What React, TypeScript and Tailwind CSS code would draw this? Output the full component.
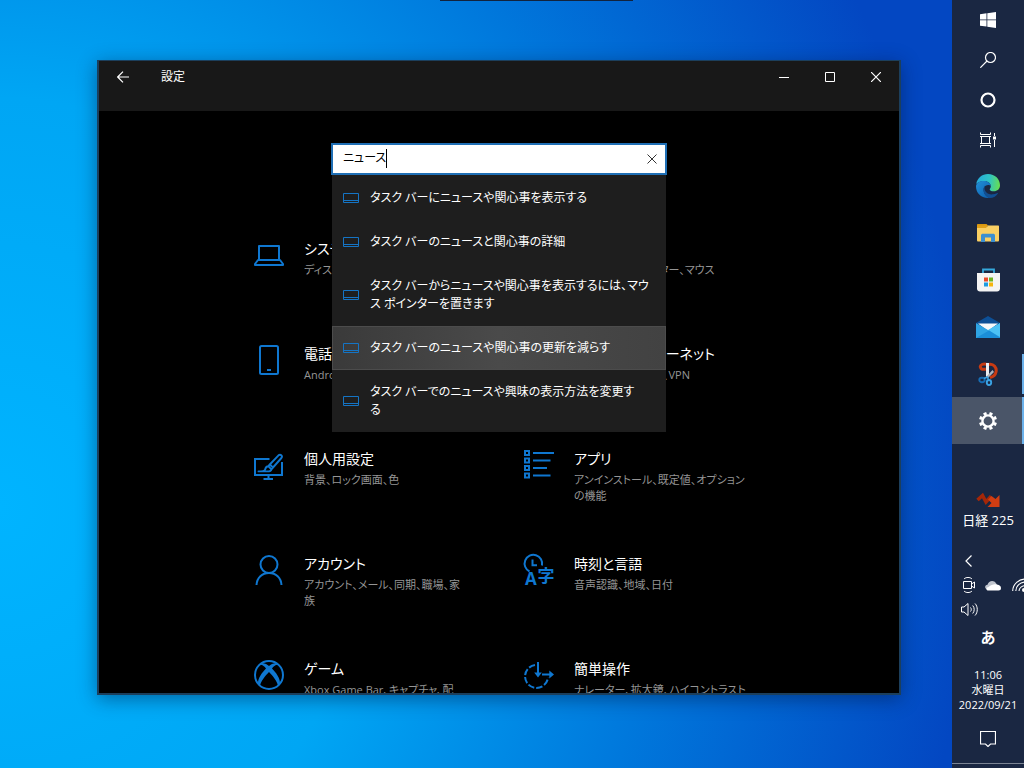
import React, { useState } from "react";

type IconProps = { children: React.ReactNode; size?: number; box?: string; className?: string };

function Svg({ children, size = 30, box = "0 0 30 30", className = "" }: IconProps) {
  return (
    <svg
      width={size}
      height={size}
      viewBox={box}
      fill="none"
      stroke="currentColor"
      aria-hidden="true"
      className={`shrink-0 ${className}`}
    >
      {children}
    </svg>
  );
}

const LaptopIcon = () => (
  <Svg>
    <path strokeWidth="2" d="M5 19.5V6H25V19.5M4 20H26L29 24V25H1V24Z" strokeLinejoin="round" />
  </Svg>
);

const PhoneIcon = () => (
  <Svg>
    <rect x="6" y="1" width="18" height="28" rx="1.500" strokeWidth="2" />
    <path strokeWidth="2" d="M13 25H17" />
  </Svg>
);

const DevicesIcon = () => (
  <Svg>
    <rect x="2" y="6" width="18" height="18" strokeWidth="2" />
    <rect x="22" y="10" width="6" height="14" strokeWidth="2" />
  </Svg>
);

const GlobeIcon = () => (
  <Svg>
    <circle cx="15" cy="15" r="13" strokeWidth="2" />
    <path strokeWidth="2" d="M2 15H28M15 2C8 9 8 21 15 28M15 2C22 9 22 21 15 28" />
  </Svg>
);

const PersonalizeIcon = () => (
  <Svg box="0 -4 30 30">
    <path strokeWidth="2" d="M15.500 5H1V21H28V8" />
    <path strokeWidth="2" d="M14.500 22V25M9.500 25H19" />
    <path
      strokeWidth="1.900"
      strokeLinejoin="round"
      d="M15.800 10.500L24.500 1.300C26.500 -0.300 29 1.800 27.400 4L19 13.500ZM15.800 10.500L14.300 12.200L17.400 15.300L19 13.500M14.300 12.200C12.500 12.300 11.500 13.800 11.200 15.300C11 16.700 10 17.400 4.500 17.400H13C15.500 17.400 17.300 16.500 17.400 15.300"
    />
  </Svg>
);

const AppsIcon = () => (
  <Svg>
    <g strokeWidth="2">
      <path d="M1 1H5V5H1ZM1 8.500H5V12.500H1ZM1 16H5V20H1ZM1 23.500H5V27.500H1Z" />
      <path d="M9 3H30M9 10.500H26.500M9 18H23M9 25.500H26.500" />
    </g>
  </Svg>
);

const AccountIcon = () => (
  <Svg>
    <circle cx="15" cy="9.500" r="8.500" strokeWidth="2" />
    <path strokeWidth="2" d="M2.500 30C3 22.500 8 18 15 18S27 22.500 27.500 30" />
  </Svg>
);

const LanguageIcon = () => (
  <Svg className="overflow-visible">
    <path strokeWidth="2" d="M5.500 16.500A8.800 8.800 0 1 1 18 10.500M8.500 4.500V10.300H13" />
    <text x="1" y="30" fontSize="17" fontWeight="700" fill="currentColor" stroke="none" fontFamily="Open Sans, sans-serif">
      A
    </text>
    <text x="13.500" y="26.500" fontSize="17" fontWeight="700" fill="currentColor" stroke="none" fontFamily="Noto Sans CJK JP, sans-serif">
      字
    </text>
  </Svg>
);

const GamingIcon = () => (
  <Svg>
    <circle cx="15" cy="15" r="14" strokeWidth="2" />
    <path
      fill="currentColor"
      stroke="none"
      d="M7.500 3.500C10 2.800 13 4.500 15 6C17 4.500 20 2.800 22.500 3.500L24.500 5C22 4.300 19.500 6.500 18 8.500C21.500 12 27 19 25.800 24L24 26C23.500 21.500 18.500 15.500 15 12C11.500 15.500 6.500 21.500 6 26L4.200 24C3 19 8.500 12 12 8.500C10.500 6.500 8 4.300 5.500 5Z"
    />
  </Svg>
);

const EaseIcon = () => (
  <Svg>
    <path strokeWidth="2" strokeDasharray="6.500 2" d="M11 5A11.500 11.500 0 1 0 24 17.500" />
    <path strokeWidth="2" d="M14 2V15M18 14.500H28" />
    <path fill="currentColor" stroke="none" d="M10.200 12.500H17.800L14 17.500ZM25.300 10.500L30 14.500L25.300 18.500Z" />
  </Svg>
);

const categories = [
  { title: "システム", detail: "ディスプレイ、サウンド、通知、電源", Icon: LaptopIcon },
  { title: "デバイス", detail: "Bluetooth、プリンター、マウス", Icon: DevicesIcon },
  { title: "電話", detail: "Android、iPhone のリンク", Icon: PhoneIcon },
  { title: "ネット と インターネット", detail: "Wi-Fi と機内モード、VPN", Icon: GlobeIcon },
  { title: "個人用設定", detail: "背景、ロック画面、色", Icon: PersonalizeIcon },
  { title: "アプリ", detail: "アンインストール、既定値、オプション\nの機能", Icon: AppsIcon },
  { title: "アカウント", detail: "アカウント、メール、同期、職場、家\n族", Icon: AccountIcon },
  { title: "時刻と言語", detail: "音声認識、地域、日付", Icon: LanguageIcon },
  { title: "ゲーム", detail: "Xbox Game Bar、キャプチャ、配", Icon: GamingIcon },
  { title: "簡単操作", detail: "ナレーター、拡大鏡、ハイコントラスト", Icon: EaseIcon },
];

const suggestions = [
  "タスク バーにニュースや関心事を表示する",
  "タスク バーのニュースと関心事の詳細",
  "タスク バーからニュースや関心事を表示するには、マウ\nス ポインターを置きます",
  "タスク バーのニュースや関心事の更新を減らす",
  "タスク バーでのニュースや興味の表示方法を変更す\nる",
];

function SearchBox() {
  const [query, setQuery] = useState("ニュース");
  return (
    <div className="relative mx-auto w-[336px]">
      <div className="flex h-8 items-center border-2 border-[#1f6fb5] bg-white pl-2.5 text-black">
        <input
          aria-label="設定の検索"
          value={query}
          onChange={(e) => setQuery(e.target.value)}
          className="[field-sizing:content] pb-0.5 text-xs caret-transparent outline-none"
        />
        <span className="mb-0.5 h-[19px] w-px bg-black" />
        <button aria-label="クリア" onClick={() => setQuery("")} className="ml-auto flex h-7 w-[26px] items-center justify-center">
          <Svg size={10} box="0 0 10 10">
            <path d="M0.500 0.500L9.500 9.500M9.500 0.500L0.500 9.500" stroke="#333" />
          </Svg>
        </button>
      </div>
      <ul className="absolute inset-x-px top-full z-10 bg-[#1e1e1e] pt-px">
        {suggestions.map((text, i) => (
          <li key={text}>
            <button
              className={`flex w-full items-center gap-[11px] py-[13px] pr-1.5 pl-[11px] text-left text-xs leading-[18px] text-white ${
                i === 3 ? "bg-gradient-to-r from-[#3a3a3a] via-[#4a4a4a] to-[#424242] ring-1 ring-[#4c4c4c] ring-inset" : ""
              }`}
            >
              <svg width="16" height="10" viewBox="0 0 16 10" fill="none" stroke="#1574c4" className="shrink-0" aria-hidden="true">
                <path d="M0.500 0.500H15.500V9.500H0.500ZM0.500 7.500H15.500" />
              </svg>
              <span className="whitespace-pre-line">{text}</span>
            </button>
          </li>
        ))}
      </ul>
    </div>
  );
}

function SettingsWindow() {
  return (
    <section className="flex min-h-0 flex-1 flex-col border-2 border-t border-[#1c3f5c] bg-black text-white shadow-[0_4px_18px_rgba(0,20,60,0.45)]">
      <header className="h-[50px] shrink-0 bg-[#181818]">
        <div className="flex h-8 items-center">
          <button aria-label="戻る" className="flex h-8 w-12 items-center justify-center">
            <Svg size={12} box="0 0 12 12">
              <path d="M12 6H0.700M6 0.700L0.700 6L6 11.300" strokeWidth="1.200" />
            </Svg>
          </button>
          <h1 className="ml-3.5 flex-1 text-xs">設定</h1>
          <button aria-label="最小化" className="flex h-8 w-[46px] items-center justify-center">
            <Svg size={10} box="0 0 10 10"><path d="M0 5.500H10" /></Svg>
          </button>
          <button aria-label="最大化" className="flex h-8 w-[46px] items-center justify-center">
            <Svg size={10} box="0 0 10 10"><path d="M0.500 0.500H9.500V9.500H0.500Z" /></Svg>
          </button>
          <button aria-label="閉じる" className="flex h-8 w-[46px] items-center justify-center">
            <Svg size={10} box="0 0 10 10"><path d="M0 0L10 10M10 0L0 10" strokeWidth="1.200" /></Svg>
          </button>
        </div>
      </header>
      <div className="min-h-0 flex-1 overflow-hidden pt-8">
        <SearchBox />
        <nav className="mt-16 grid auto-rows-[105px] grid-cols-[270px_270px] justify-center">
          {categories.map(({ title, detail, Icon }) => (
            <a key={title} href="#" className="flex gap-5 pl-[25px]">
              <span className="pt-px text-[#0f77d0]">
                <Icon />
              </span>
              <span className="flex min-w-0 flex-1 flex-col gap-[3px]">
                <span className="text-sm leading-5 whitespace-nowrap">{title}</span>
                <span className="text-[11px] leading-4 whitespace-pre-line text-[#959595]">{detail}</span>
              </span>
            </a>
          ))}
        </nav>
      </div>
    </section>
  );
}

function PinnedApps() {
  const cell = "flex h-[47px] w-full items-center justify-center";
  return (
    <>
      <button aria-label="Microsoft Edge" className={cell}>
        <svg width="24" height="24" viewBox="0 0 24 24" aria-hidden="true">
          <defs>
            <linearGradient id="edgeTop" x1="0" y1="0.300" x2="1" y2="0.400">
              <stop offset="0" stopColor="#24a9dc" />
              <stop offset="0.550" stopColor="#2fc3c4" />
              <stop offset="1" stopColor="#66dd53" />
            </linearGradient>
            <linearGradient id="edgeLow" x1="0" y1="0" x2="1" y2="1">
              <stop offset="0" stopColor="#2190d8" />
              <stop offset="1" stopColor="#0c5cab" />
            </linearGradient>
          </defs>
          <path fill="url(#edgeTop)" d="M0.200 10C1.300 4 6 0 12 0C19 0 24 5 24 11.300C24 15 21.300 17.300 17.800 17.300C15 17.300 13.700 16.300 13.700 15.500C13.700 14.800 14.800 14.200 14.800 12.300C14.800 9.500 12 7 8 7C4.500 7 1.500 8.500 0.200 10Z" />
          <path fill="url(#edgeLow)" d="M0 12.500C0 9 3.500 7 8 7C12 7 14.800 9.500 14.800 12C13.500 10.500 9 10.500 7.800 14C6.700 18 10 23 14 23.800C6 25 0 19.500 0 12.500Z" />
          <path fill="#124f92" d="M9 11.500C7 17 11.500 21 17 20.300C19.500 20 21.500 18.700 22.300 18.700C20.500 22 17.500 24 13.500 24C8.500 22.500 5.500 16 9 11.500Z" />
        </svg>
      </button>
      <button aria-label="エクスプローラー" className={cell}>
        <svg width="22" height="18" viewBox="0 0 22 18" aria-hidden="true">
          <path fill="#d7950f" d="M0 1C0 0.300 0.400 0 1 0H9.500L11.500 2H0Z" />
          <path fill="#e0a019" d="M0 1.500H10V5H0Z" />
          <path fill="#f9cf63" d="M0 4H9L11 1.500H21C21.700 1.500 22 1.900 22 2.500V16C22 17 21.500 17.500 20.700 17.500H1.300C0.500 17.500 0 17 0 16Z" />
          <path fill="#3c8fd0" d="M4 18V11.500C4 10.300 4.700 9.700 6 9.700H16C17.300 9.700 18 10.300 18 11.500V18H14V13.500H8V18Z" />
        </svg>
      </button>
      <button aria-label="Microsoft Store" className={cell}>
        <svg width="23" height="24" viewBox="0 0 23 24" aria-hidden="true">
          <path fill="none" stroke="#35a9dc" strokeWidth="1.800" d="M6 6V1.500H17V6" />
          <path fill="#f4f4f4" d="M0 5H23V20.500C23 22.500 21.700 23.500 20 23.500H3C1.300 23.500 0 22.500 0 20.500Z" />
          <path fill="#e84a2a" d="M7 9.500H11V13.500H7Z" />
          <path fill="#6fb422" d="M12 9.500H16V13.500H12Z" />
          <path fill="#1d9be0" d="M7 14.500H11V18.500H7Z" />
          <path fill="#f5b50e" d="M12 14.500H16V18.500H12Z" />
        </svg>
      </button>
      <button aria-label="メール" className={cell}>
        <svg width="24" height="22" viewBox="0 0 24 22" aria-hidden="true">
          <path fill="#0d4f96" d="M0 7L12 0L24 7L12 15Z" />
          <path fill="#f6f8fa" d="M2 7.500H22L12 15Z" />
          <path fill="#2fa4e4" d="M0 7V22H24V7L13 14.500L12 14Z" />
          <path fill="#4cc2f5" d="M24 7V21L12 14Z" />
          <path fill="#1b8ed8" d="M0 22L13 14.500L24 21.500V22Z" />
        </svg>
      </button>
      <button aria-label="切り取り &amp; スケッチ" className="flex h-[47px] w-full items-center border-r-2 border-transparent [border-image:linear-gradient(transparent_5px,#6cb2ec_5px,#6cb2ec_43px,transparent_43px)_1]">
        <span className="flex flex-1 justify-center pl-0.5">
          <svg width="20" height="24" viewBox="0 0 20 24" fill="none" aria-hidden="true">
            <path stroke="#c83a12" strokeWidth="3" d="M10 2.500C5 1 1.500 3 2.500 5.500C3.200 7.500 6 7.500 8 7M10 2.500C16 1 19 6 18 10C17.300 13.500 14.500 15 12 15.500" />
            <path fill="#eceff2" d="M8 1H11V14L9.500 16L8 14Z" />
            <path fill="#aab2bc" d="M14.500 8L16 10L10 16L8.500 14.500Z" />
            <ellipse cx="4" cy="18" rx="2.700" ry="2.200" stroke="#176db4" strokeWidth="1.900" />
            <ellipse cx="11" cy="20.500" rx="2.200" ry="2.500" stroke="#3aa2e4" strokeWidth="1.900" />
            <path stroke="#3aa2e4" strokeWidth="1.500" d="M6 16.500L9.500 15L10.500 18" />
          </svg>
        </span>
      </button>
      <button aria-label="設定" className="flex h-[47px] w-full items-center border-r-2 border-[#6cb2ec] bg-[#4a5568]">
        <span className="flex flex-1 justify-center pl-0.5 text-white">
          <svg width="18" height="18" viewBox="0 0 18 18" fill="none" stroke="currentColor" aria-hidden="true">
            <circle cx="9" cy="9" r="5.600" strokeWidth="2.400" />
            <path
              strokeWidth="3.200"
              d="M6.600 3.200L5.600 0.700M11.400 3.200L12.400 0.700M6.600 14.800L5.600 17.300M11.400 14.800L12.400 17.300M3.200 6.600L0.700 5.600M3.200 11.400L0.700 12.400M14.800 6.600L17.300 5.600M14.800 11.400L17.300 12.400"
            />
          </svg>
        </span>
      </button>
    </>
  );
}

function Taskbar() {
  const cell = "flex h-10 w-full items-center justify-center";
  return (
    <aside className="flex w-[72px] shrink-0 flex-col items-center overflow-hidden bg-[#1a2742] text-white">
      <button aria-label="スタート" className={cell}>
        <svg width="16" height="16" viewBox="0 0 16 16" fill="currentColor" aria-hidden="true">
          <path d="M0 2.200L6.500 1.300V7.500H0ZM7.300 1.200L16 0V7.500H7.300ZM0 8.300H6.500V14.600L0 13.700ZM7.300 8.300H16V16L7.300 14.800Z" />
        </svg>
      </button>
      <button aria-label="検索" className={cell}>
        <Svg size={16} box="0 0 16 16">
          <circle cx="10.500" cy="5.500" r="5" strokeWidth="1.200" />
          <path d="M7 9L0.300 15.700" strokeWidth="1.200" />
        </Svg>
      </button>
      <button aria-label="Cortana" className={cell}>
        <Svg size={16} box="0 0 16 16"><circle cx="8" cy="8" r="6.500" strokeWidth="2.200" /></Svg>
      </button>
      <button aria-label="タスク ビュー" className={cell}>
        <Svg size={16} box="0 0 16 16">
          <path d="M0.500 0.500V2.500H10.500V0.500M0.500 15.500V13.500H10.500V15.500M0 4.500H11M0 11.500H11M1.500 4.500V11.500M9.500 4.500V11.500M14.500 1V4M14.500 8V15" />
          <rect x="13" y="4.500" width="3" height="3" fill="currentColor" stroke="none" />
        </Svg>
      </button>
      <div className="mt-0.5 w-full">
        <PinnedApps />
      </div>
      <button className="mt-12 flex flex-col items-center text-[13px] leading-[18px] whitespace-nowrap">
        <svg width="24" height="17" viewBox="0 0 24 17" fill="none" aria-hidden="true">
          <path stroke="#a52708" strokeWidth="3.600" d="M1.500 8L6.500 3.500L10 10L14 5.500L20 11" />
          <path fill="#d03d12" d="M23.500 3V15H11.500L15.500 11L12 7.500L15.500 4L19.500 7Z" />
        </svg>
        <span className="mt-0.5">日経 225</span>
      </button>
      <div className="mt-auto flex w-full flex-col items-center">
        <button aria-label="隠れているインジケーター" className="ml-[5px] flex h-6 w-6 items-center justify-center self-start">
          <Svg size={12} box="0 0 12 12"><path d="M8.500 0.500L3 6L8.500 11.500" strokeWidth="1.200" /></Svg>
        </button>
        <div className="grid w-[72px] grid-cols-[24px_24px_24px] self-start pl-[5px]">
          <button aria-label="今すぐ会議を開始する" className="flex h-6 items-center justify-center">
            <Svg size={16} box="0 0 16 16">
              <path d="M2.500 4.500H10.500V11.500H2.500ZM10.500 7L13.500 5V11L10.500 9M3 2C5 -0.100 9 -0.100 11 2M3 14C5 16.100 9 16.100 11 14" />
            </Svg>
          </button>
          <button aria-label="OneDrive" className="flex h-6 items-center justify-center">
            <svg width="16" height="11" viewBox="0 0 16 11" aria-hidden="true">
              <path fill="#c0c5ce" d="M2.500 9.500C-0.800 9 -0.500 5 2.500 4.700C3.500 0.500 9 -0.500 11 3.300L13 6Z" />
              <path fill="#fff" d="M2.500 10.500C0.500 9.500 1.500 7.500 3.500 7C6 5 9 4 11 4.500C14 4.500 16 6 16 8C16 9.800 15 10.500 13.500 10.500Z" />
            </svg>
          </button>
          <button aria-label="ネットワーク" className="ml-[7px] flex h-6 w-4 items-center">
            <Svg size={16} box="0 0 16 16">
              <path d="M0.700 14C0.700 7 7 2 14 2M3.800 14C3.800 9 8 5 14 5M7 14C7 11 10 8.500 14 8.500" strokeWidth="1.100" />
              <circle cx="12" cy="13" r="2" fill="currentColor" stroke="none" />
            </Svg>
          </button>
          <button aria-label="音量" className="flex h-6 items-center justify-center">
            <Svg size={17} box="0 0 17 16">
              <path d="M0.500 5.500H3L7 2V14L3 10.500H0.500ZM9.500 6C10.500 7 10.500 9 9.500 10M11.700 4C13.700 6 13.700 10 11.700 12M14 2C17 5 17 11 14 14" />
            </Svg>
          </button>
        </div>
        <button className="mt-1 text-[15px] leading-6 font-bold">あ</button>
        <button className="mt-[18px] flex flex-col items-center text-[11px] leading-[15px] whitespace-nowrap">
          <span>11:06</span>
          <span>水曜日</span>
          <span>2022/09/21</span>
        </button>
        <button aria-label="アクション センター" className="mt-[7px] flex h-10 w-full items-center justify-center">
          <Svg size={16} box="0 0 16 16"><path d="M0.500 0.500H15.500V13H10.500L8 15.500L5.500 13H0.500Z" strokeWidth="1.200" /></Svg>
        </button>
        <button aria-label="デスクトップの表示" className="mt-1 h-[5px] w-full border-t border-[#7b8494]" />
      </div>
    </aside>
  );
}

export default function App() {
  return (
    <div
      lang="ja"
      className="flex h-screen overflow-hidden bg-[#0347c2] font-['Open_Sans','Noto_Sans_CJK_JP',sans-serif] [font-feature-settings:'palt']"
    >
      <main className="relative flex min-w-0 flex-1 flex-col bg-[radial-gradient(ellipse_102%_140%_at_0%_66%,#00b4ff_0%,#00a6f4_38%,#0078dc_68%,#0347c2_100%)] pt-[60px] pr-[51px] pb-[73px] pl-[97px]">
        <div className="absolute top-0 right-[319px] h-px w-[193px] bg-[#12233d]" />
        <SettingsWindow />
      </main>
      <Taskbar />
    </div>
  );
}
